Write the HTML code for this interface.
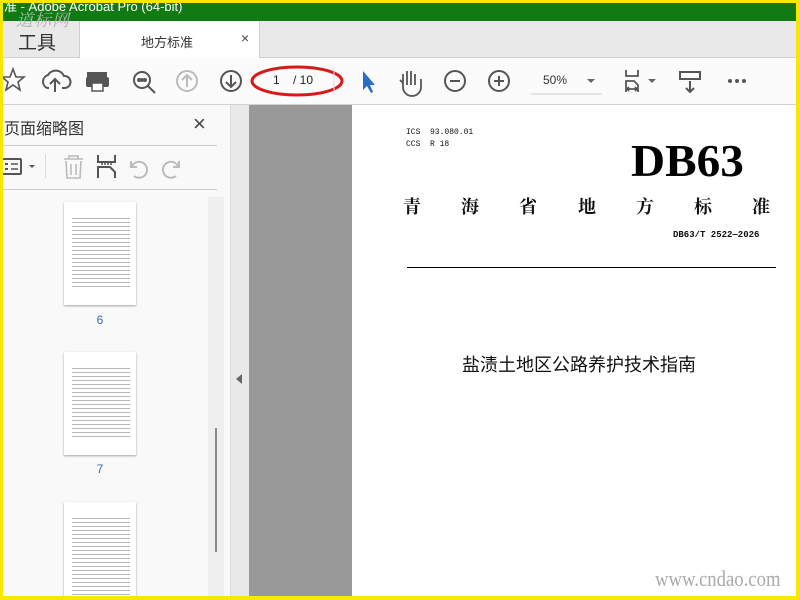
<!DOCTYPE html>
<html><head><meta charset="utf-8"><style>
*{margin:0;padding:0;box-sizing:border-box}
body{width:800px;height:600px;overflow:hidden;background:#fff;position:relative;font-family:"Liberation Sans","Noto Sans CJK SC",sans-serif}
.a{position:absolute}
svg{position:absolute;overflow:visible}
.thumb{position:absolute;left:64px;width:72px;height:103px;background:#fff;box-shadow:0 1px 2px rgba(0,0,0,.35)}
.thumb .txt{position:absolute;left:8px;right:6px;top:14px;bottom:16px;background:repeating-linear-gradient(#fff 0 2px,#888 2px 3px,#fff 3px 4px);opacity:.6}
.num{position:absolute;width:72px;left:64px;text-align:center;font-size:12px;color:#3a6aa8}
.ch{position:absolute;top:193px;font-size:18px;font-weight:bold;color:#111;font-family:"Noto Serif CJK SC",serif}
</style></head><body>
<div class="a" style="left:0;top:0;width:800px;height:600px;border:3px solid #f6e800;border-right-width:4px;border-bottom-width:4px;z-index:10;pointer-events:none"></div>
<div class="a" style="left:0;top:0;width:800px;height:21px;background:#127a12;color:#fff;font-size:13px;line-height:14px;padding-left:4px;overflow:hidden">准 - Adobe Acrobat Pro (64-bit)</div>
<div class="a" style="left:0;top:21px;width:800px;height:37px;background:#e9e9e9;border-bottom:1px solid #cfcfcf"></div>
<div class="a" style="left:18px;top:28px;font-size:19px;color:#333">工具</div>
<div class="a" style="left:16px;top:6px;font-size:17px;color:#b0b0b0;font-family:'Noto Serif CJK SC',serif;letter-spacing:1px;font-style:italic;z-index:5">道标网</div>
<div class="a" style="left:79px;top:21px;width:181px;height:37px;background:#fff;border-left:1px solid #cfcfcf;border-right:1px solid #cfcfcf"></div>
<div class="a" style="left:141px;top:32px;font-size:13px;color:#333">地方标准</div>
<div class="a" style="left:241px;top:30px;font-size:14px;color:#444">×</div>
<div class="a" style="left:0;top:58px;width:800px;height:47px;background:#fbfbfb;border-bottom:1px solid #d2d2d2"></div>
<svg width="800" height="50" style="left:0;top:57px" fill="none" stroke="#555" stroke-width="2">
<path d="M13 12 L16 20 L24 20 L18 25 L20 33 L13 28 L6 33 L8 25 L2 20 L10 20Z" stroke-width="1.6"/>
<path d="M49 31 H47 a7 7 0 0 1 1-13 a9 9 0 0 1 16 1 a6 6 0 0 1 1 12 H62 M55 35 V22 M50 27 L55 22 L60 27"/>
<rect x="87" y="15" width="20" height="6" fill="#555" stroke="none"/><rect x="86" y="20" width="23" height="10" rx="2" fill="#555" stroke="none"/><rect x="92" y="26" width="11" height="8" fill="#fff" stroke="#555" stroke-width="1.5"/>
<circle cx="142" cy="23" r="8"/><path d="M148 29 L155 36"/><circle cx="139" cy="23" r="1" fill="#555"/><circle cx="142" cy="23" r="1" fill="#555"/><circle cx="145" cy="23" r="1" fill="#555"/>
<circle cx="187" cy="24" r="10" stroke="#bbb"/><path d="M187 30 V18 M182 23 L187 18 L192 23" stroke="#bbb"/>
<circle cx="231" cy="24" r="10"/><path d="M231 18 V30 M226 25 L231 30 L236 25"/>
<ellipse cx="297" cy="24" rx="45" ry="14" stroke="#d8191a" stroke-width="3"/>
<line x1="334" y1="10" x2="334" y2="38" stroke="#ddd" stroke-width="1"/>
<path d="M363 14 L363 33 L367 29 L371 36 L373 35 L370 28 L375 28Z" fill="#2b6cc4" stroke="none"/>
<path d="M403 30 V17 M407 28 V14 M411 28 V14 M415 28 V17 M403 30 a9 9 0 0 0 18 0 V22 M403 26 L400 23" stroke-width="1.8"/>
<circle cx="455" cy="24" r="10"/><path d="M450 24 H460"/>
<circle cx="499" cy="24" r="10"/><path d="M494 24 H504 M499 19 V29"/>
<line x1="531" y1="37" x2="602" y2="37" stroke="#ccc" stroke-width="1"/>
<path d="M587 22 L591 26 L595 22Z" fill="#666" stroke="none"/>
<path d="M626 13 V19 H638 V13 M626 35 V24 H634 L638 28 V35 M627 32 H637 M629 30 L627 32 L629 34 M635 30 L637 32 L635 34" stroke-width="1.8"/>
<path d="M648 22 L652 26 L656 22Z" fill="#666" stroke="none"/>
<rect x="680" y="15" width="20" height="7" stroke-width="2"/><path d="M690 24 V35 M686 31 L690 35 L694 31"/>
<circle cx="730" cy="24" r="2" fill="#555" stroke="none"/><circle cx="737" cy="24" r="2" fill="#555" stroke="none"/><circle cx="744" cy="24" r="2" fill="#555" stroke="none"/>
</svg>
<div class="a" style="left:273px;top:73px;font-size:12px;color:#222">1</div>
<div class="a" style="left:293px;top:73px;font-size:12px;color:#222">/ 10</div>
<div class="a" style="left:543px;top:73px;font-size:12px;color:#333">50%</div>
<div class="a" style="left:0;top:105px;width:231px;height:495px;background:#f9f9f9;border-right:1px solid #ddd;overflow:hidden">
<div class="thumb" style="top:97px"><div class="txt"></div></div>
<div class="num" style="top:208px">6</div>
<div class="thumb" style="top:247px"><div class="txt"></div></div>
<div class="num" style="top:357px">7</div>
<div class="thumb" style="top:397px;height:110px"><div class="txt"></div></div>
</div>
<div class="a" style="left:4px;top:115px;font-size:16px;color:#333">页面缩略图</div>
<div class="a" style="left:193px;top:111px;font-size:22px;color:#444">×</div>
<div class="a" style="left:0;top:145px;width:217px;height:1px;background:#ccc"></div>
<div class="a" style="left:0;top:189px;width:217px;height:1px;background:#ccc"></div>
<svg width="230" height="40" style="left:0;top:150px" fill="none" stroke="#555" stroke-width="2">
<rect x="0" y="9" width="21" height="15" rx="1"/><rect x="5" y="13" width="3" height="2" fill="#555" stroke="none"/><rect x="5" y="18" width="3" height="2" fill="#555" stroke="none"/><path d="M11 14 H18 M11 19 H18" stroke-width="1.5"/>
<path d="M29 15 L32 18 L35 15Z" fill="#555" stroke="none"/>
<line x1="45.5" y1="4" x2="45.5" y2="28" stroke="#ddd" stroke-width="1"/>
<path d="M64 9 H83 M69 9 V6 H78 V9 M66 11 L67 28 H80 L81 11 M71 14 V25 M76 14 V25" stroke="#bbb" stroke-width="1.6"/>
<path d="M98 5 V12 H115 V5 M98 28 V17 H110 L115 22 V28" stroke-width="2"/><path d="M101 14 H113" stroke-dasharray="2 1" stroke-width="1.5"/>
<path d="M134 26 a8 8 0 1 0 -2 -10 M131 11 V17 H137" stroke="#bbb" stroke-width="2"/>
<path d="M176 26 a8 8 0 1 1 2 -10 M179 11 V17 H173" stroke="#bbb" stroke-width="2"/>
</svg>
<div class="a" style="left:208px;top:197px;width:16px;height:403px;background:#efefef"></div>
<div class="a" style="left:215px;top:428px;width:2px;height:124px;background:#8a8a8a"></div>
<div class="a" style="left:231px;top:105px;width:18px;height:495px;background:#e9e9e9"></div>
<div class="a" style="left:236px;top:374px;width:0;height:0;border-top:5px solid transparent;border-bottom:5px solid transparent;border-right:6px solid #666"></div>
<div class="a" style="left:249px;top:105px;width:103px;height:495px;background:#999"></div>
<div class="a" style="left:406px;top:127px;font-size:8px;color:#111;font-family:'Liberation Mono',monospace;line-height:12px">ICS&nbsp; 93.080.01<br>CCS&nbsp; R 18</div>
<div class="a" style="left:631px;top:136px;font-size:45px;font-weight:bold;color:#000;font-family:'Liberation Serif',serif;line-height:50px;transform:scaleX(1.05);transform-origin:left">DB63</div>
<div class="ch" style="left:403px">青</div><div class="ch" style="left:461px">海</div><div class="ch" style="left:519px">省</div><div class="ch" style="left:578px">地</div><div class="ch" style="left:636px">方</div><div class="ch" style="left:694px">标</div><div class="ch" style="left:752px">准</div>
<div class="a" style="left:673px;top:230px;font-size:9px;color:#111;font-family:'Liberation Mono',monospace;font-weight:bold">DB63/T 2522—2026</div>
<div class="a" style="left:407px;top:267px;width:369px;height:1px;background:#000"></div>
<div class="a" style="left:462px;top:351px;font-size:18px;color:#111">盐渍土地区公路养护技术指南</div>
<div class="a" style="left:655px;top:566px;font-size:22px;color:#aaa;font-family:'Liberation Serif',serif;transform:scaleX(.85);transform-origin:left">www.cndao.com</div>
</body></html>
